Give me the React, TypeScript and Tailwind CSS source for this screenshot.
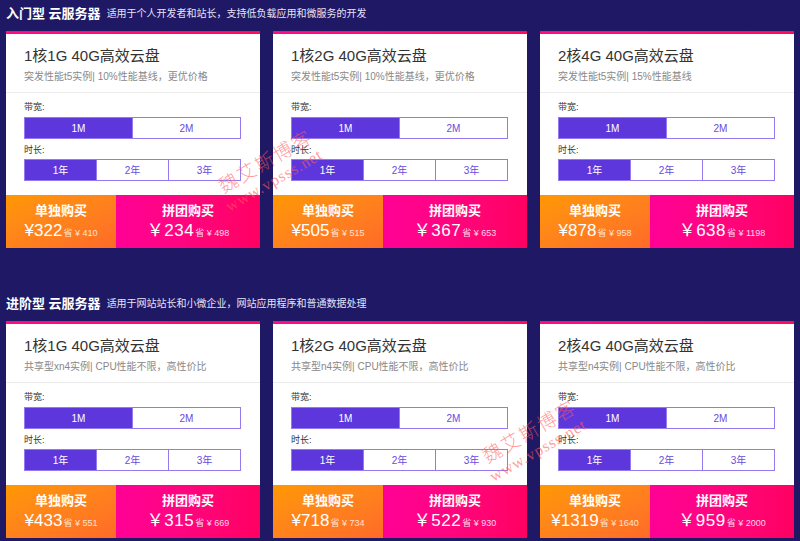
type Plan = {
  title: string
  desc: string
  single: string
  singleSave: string
  group: string
  groupSave: string
}

const sections: { name: string; intro: string; plans: Plan[] }[] = [
  {
    name: '入门型 云服务器',
    intro: '适用于个人开发者和站长，支持低负载应用和微服务的开发',
    plans: [
      { title: '1核1G 40G高效云盘', desc: '突发性能t5实例| 10%性能基线，更优价格', single: '322', singleSave: '410', group: '234', groupSave: '498' },
      { title: '1核2G 40G高效云盘', desc: '突发性能t5实例| 10%性能基线，更优价格', single: '505', singleSave: '515', group: '367', groupSave: '653' },
      { title: '2核4G 40G高效云盘', desc: '突发性能t5实例| 15%性能基线', single: '878', singleSave: '958', group: '638', groupSave: '1198' },
    ],
  },
  {
    name: '进阶型 云服务器',
    intro: '适用于网站站长和小微企业，网站应用程序和普通数据处理',
    plans: [
      { title: '1核1G 40G高效云盘', desc: '共享型xn4实例| CPU性能不限，高性价比', single: '433', singleSave: '551', group: '315', groupSave: '669' },
      { title: '1核2G 40G高效云盘', desc: '共享型n4实例| CPU性能不限，高性价比', single: '718', singleSave: '734', group: '522', groupSave: '930' },
      { title: '2核4G 40G高效云盘', desc: '共享型n4实例| CPU性能不限，高性价比', single: '1319', singleSave: '1640', group: '959', groupSave: '2000' },
    ],
  },
]

function Segments({ items }: { items: string[] }) {
  return (
    <div className="flex h-[22px] border border-[#9479ef]">
      {items.map((it, i) => (
        <div
          key={it}
          className={`flex-1 flex items-center justify-center text-[10px] ${
            i === 0 ? 'bg-[#5e37dc] text-white' : 'bg-white text-[#6a4ae0] border-l border-[#9479ef]'
          }`}
        >
          {it}
        </div>
      ))}
    </div>
  )
}

function Card({ plan }: { plan: Plan }) {
  return (
    <div className="w-[254px] flex flex-col">
      <div className="h-[3px] bg-gradient-to-r from-[#ff0a84] to-[#ff0a5c]" />
      <div className="bg-white">
        <div className="pl-[18px] pt-[11px] pb-[8px] border-b border-[#ececec]">
          <div className="text-[15px] leading-[22px] text-[#333]">{plan.title}</div>
          <div className="text-[10px] leading-[14px] mt-[3px] text-[#888]">{plan.desc}</div>
        </div>
        <div className="pl-[18px] pr-[19px] pt-[8px] pb-[14px]">
          <div className="text-[9px] leading-[12px] text-[#333]">带宽:</div>
          <div className="mt-[4px]">
            <Segments items={['1M', '2M']} />
          </div>
          <div className="text-[9px] leading-[12px] text-[#333] mt-[5px]">时长:</div>
          <div className="mt-[3px]">
            <Segments items={['1年', '2年', '3年']} />
          </div>
        </div>
      </div>
      <div className="flex h-[53px] text-white">
        <div className="w-[110px] flex flex-col items-center justify-center bg-gradient-to-br from-[#ff9800] to-[#ff6a28]">
          <div className="text-[13px] font-bold leading-[17px]">单独购买</div>
          <div className="flex items-baseline mt-[2px]">
            <span className="text-[17px] leading-[20px]">¥{plan.single}</span>
            <span className="text-[9px] text-[#ffe2cc] ml-[1px]">省 ¥ {plan.singleSave}</span>
          </div>
        </div>
        <div className="flex-1 flex flex-col items-center justify-center bg-gradient-to-r from-[#ff0096] to-[#ff0062]">
          <div className="text-[13px] font-bold leading-[17px]">拼团购买</div>
          <div className="flex items-baseline mt-[2px]">
            <span className="text-[17px] leading-[20px] tracking-[0.5px]">￥{plan.group}</span>
            <span className="text-[9px] text-[#ffd6ea] ml-[1px]">省 ¥ {plan.groupSave}</span>
          </div>
        </div>
      </div>
    </div>
  )
}

// diagonal blog watermark drawn over the cards
function Watermark({ className }: { className: string }) {
  return (
    <div
      className={`absolute pointer-events-none -rotate-[30deg] text-[#ff5a5a]/60 ${className}`}
      style={{ fontFamily: '"Liberation Serif", "Noto Sans CJK SC", serif' }}
    >
      <div className="text-[19px] leading-[22px] tracking-[2px] font-light">魏艾斯博客</div>
      <div className="text-[16px] leading-[18px] tracking-[1px] -ml-[4px]">www.vpsss.net</div>
    </div>
  )
}

export default function App() {
  return (
    <div
      className="relative w-[800px] h-[541px] overflow-hidden bg-[#1f1864] px-[6px]"
      style={{ fontFamily: '"Liberation Sans", "Noto Sans CJK SC", sans-serif' }}
    >
      {sections.map((s, idx) => (
        <div key={s.name} className={idx === 0 ? '' : 'mt-[42px]'}>
          <div className="h-[31px] flex items-center pb-[4px]">
            <span className="text-[13px] font-bold text-white">{s.name}</span>
            <span className="text-[10px] text-[#e6e3f5] ml-[6px]">{s.intro}</span>
          </div>
          <div className="flex gap-[13px]">
            {s.plans.map((p) => (
              <Card key={p.title + p.single} plan={p} />
            ))}
          </div>
        </div>
      ))}
      <Watermark className="left-[218px] top-[150px]" />
      <Watermark className="left-[482px] top-[420px]" />
    </div>
  )
}
